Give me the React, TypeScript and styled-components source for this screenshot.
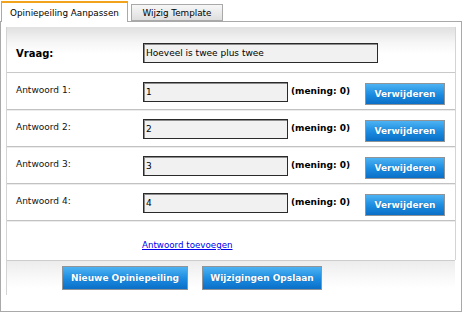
import styled, { createGlobalStyle } from 'styled-components';

const GlobalStyle = createGlobalStyle`
  html, body {
    margin: 0;
    padding: 0;
    background: #ffffff;
  }
  body {
    font-family: "DejaVu Sans", Verdana, sans-serif;
    font-size: 9px;
    color: #1a1a1a;
  }
`;

const Page = styled.div`
  width: 462px;
`;

const TabBar = styled.div`
  display: flex;
  align-items: flex-end;
  gap: 3px;
  height: 21px;
  padding-left: 1px;
`;

const Tab = styled.div<{ $active?: boolean }>`
  position: relative;
  z-index: 1;
  box-sizing: border-box;
  display: flex;
  align-items: center;
  justify-content: center;
  height: ${({ $active }) => ($active ? '21px' : '17px')};
  width: ${({ $active }) => ($active ? '127px' : '92px')};
  margin-bottom: ${({ $active }) => ($active ? '-1px' : '0')};
  border: 1px solid #a9a9a9;
  border-top: ${({ $active }) => ($active ? '2px solid #f2a31c' : '1px solid #a9a9a9')};
  border-bottom: ${({ $active }) => ($active ? 'none' : '1px solid #a9a9a9')};
  background: ${({ $active }) =>
    $active ? '#ffffff' : 'linear-gradient(#f7f7f7, #dedede)'};
  font-size: 8.8px;
  color: #000;
  padding-top: ${({ $active }) => ($active ? '1px' : '0')};
`;

const Panel = styled.div`
  box-sizing: border-box;
  height: 291px;
  border: 1px solid #a9a9a9;
  padding: 5px 5px 0 5px;
`;

const Sheet = styled.div`
  border-left: 1px solid #d4d4d4;
  border-right: 1px solid #d4d4d4;
`;

const QuestionRow = styled.div`
  box-sizing: border-box;
  display: flex;
  align-items: center;
  height: 46px;
  padding: 7px 0 0 9px;
  background: linear-gradient(#e0e0e0, #f6f6f6 35%, #ffffff 60%);
  border-bottom: 1px solid #c9c9c9;
`;

const QuestionLabel = styled.div`
  width: 127px;
  font-size: 10px;
  font-weight: bold;
  color: #000;
`;

const TextField = styled.input<{ $w: number }>`
  box-sizing: border-box;
  width: ${({ $w }) => $w}px;
  height: 20px;
  margin: 0;
  padding: 0 0 0 2px;
  border: 1px solid #2a2a2a;
  box-shadow: inset 1px 1px 0 #8c8c8c;
  background: #f1f1f1;
  font-family: "DejaVu Sans", Verdana, sans-serif;
  font-size: 9px;
  color: #000;
  outline: none;
`;

const AnswerRow = styled.div`
  box-sizing: border-box;
  display: flex;
  align-items: flex-start;
  height: 37px;
  padding: 9px 0 0 9px;
  border-bottom: 1px solid #c2c2c2;
  box-shadow: 0 1px 0 #ececec;
`;

const AnswerLabel = styled.div`
  width: 127px;
  margin-top: 3px;
  color: #111;
`;

const Votes = styled.div`
  width: 74px;
  margin-left: 3px;
  line-height: 19px;
  font-weight: bold;
  color: #000;
`;

const BlueButton = styled.button<{ $w: number; $h: number }>`
  box-sizing: border-box;
  width: ${({ $w }) => $w}px;
  height: ${({ $h }) => $h}px;
  margin: 0;
  padding: 0;
  border: 1px solid #8f9499;
  background: linear-gradient(#4cb2f2, #1a8ae0 55%, #0b6fc6);
  color: #ffffff;
  font-family: "DejaVu Sans", Verdana, sans-serif;
  font-size: 9px;
  font-weight: bold;
  text-shadow: 0 0 1px rgba(0, 40, 90, 0.4);
  cursor: pointer;
`;

const RemoveButton = styled(BlueButton)`
  margin-top: 1px;
`;

const LinkRow = styled.div`
  box-sizing: border-box;
  height: 39px;
  padding: 19px 0 0 135px;
`;

const AddLink = styled.a`
  font-size: 8.7px;
  color: #0000ee;
  text-decoration: underline;
  cursor: pointer;
`;

const Footer = styled.div`
  box-sizing: border-box;
  display: flex;
  gap: 14px;
  height: 35px;
  padding: 5px 0 0 55px;
  border-top: 1px solid #cdcdcd;
  border-left: 1px solid #d4d4d4;
  margin-right: 1px;
  background: linear-gradient(#ececec, #f8f8f8 45%, #ffffff 80%);
`;

const answers = ['1', '2', '3', '4'];

export default function App() {
  return (
    <Page>
      <GlobalStyle />
      <TabBar>
        <Tab $active>Opiniepeiling Aanpassen</Tab>
        <Tab>Wijzig Template</Tab>
      </TabBar>
      <Panel>
        <Sheet>
          <QuestionRow>
            <QuestionLabel>Vraag:</QuestionLabel>
            <TextField $w={235} defaultValue="Hoeveel is twee plus twee" />
          </QuestionRow>
          {answers.map((a, i) => (
            <AnswerRow key={a}>
              <AnswerLabel>Antwoord {i + 1}:</AnswerLabel>
              <TextField $w={145} defaultValue={a} />
              <Votes>(mening: 0)</Votes>
              <RemoveButton $w={80} $h={22}>Verwijderen</RemoveButton>
            </AnswerRow>
          ))}
          <LinkRow>
            <AddLink>Antwoord toevoegen</AddLink>
          </LinkRow>
        </Sheet>
        <Footer>
          <BlueButton $w={126} $h={24}>Nieuwe Opiniepeiling</BlueButton>
          <BlueButton $w={120} $h={24}>Wijzigingen Opslaan</BlueButton>
        </Footer>
      </Panel>
    </Page>
  );
}
